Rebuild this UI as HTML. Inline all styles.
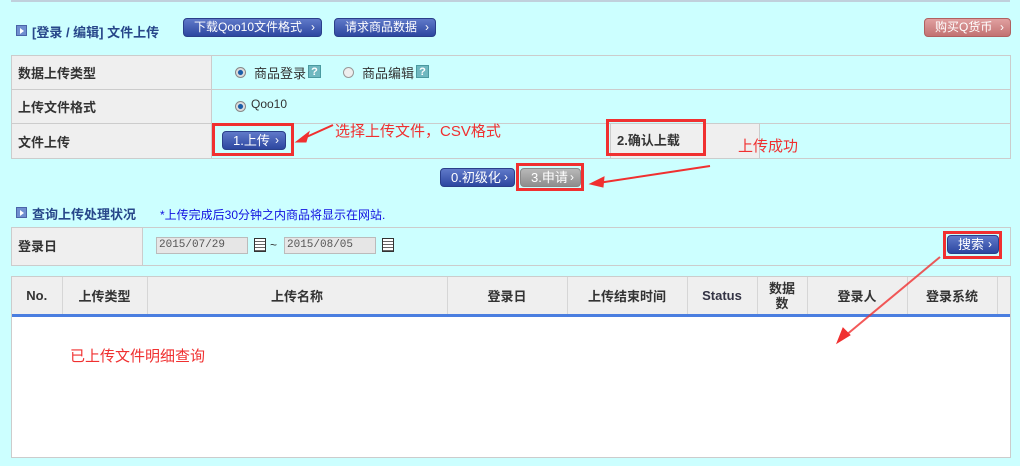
<!DOCTYPE html>
<html><head><meta charset="utf-8"><style>
*{margin:0;padding:0;box-sizing:border-box}
body{width:1020px;height:466px;background:#ccffff;position:relative;overflow:hidden;font-family:"Liberation Sans","Noto Sans CJK SC",sans-serif;font-size:12px;color:#333}
.a{position:absolute}
.ico{width:11px;height:11px;border:1px solid #4a64a8;background:#6f8fd0;}
.ico:after{content:"";position:absolute;left:3px;top:2px;border-left:4px solid #fff;border-top:3px solid transparent;border-bottom:3px solid transparent}
.h{font-weight:bold;color:#27478a;font-size:13px}
.btn{position:absolute;height:19px;border:1px solid #2a3f8a;border-radius:4px;background:linear-gradient(#5f79c9,#2c47a0);color:#fff;font-size:12px;line-height:17px;padding-left:10px;white-space:nowrap}
.btn:after{content:"›";position:absolute;right:6px;top:0;font-size:12px}
.gray{background:linear-gradient(#b8b8b8,#8e8e8e);border-color:#888}
.pink{background:linear-gradient(#e0a0a0,#c27272);border-color:#b06060}
.lbl{background:#efefef;font-weight:bold;font-size:13px;padding-left:6px}
.line{position:absolute;background:#cccccc}
.red{position:absolute;border:3px solid #f03030}
.rt{position:absolute;color:#f03030;font-size:15px}
.inp{position:absolute;height:17px;background:#e6e6e6;border:1px solid #bbb;font-size:11px;color:#555;padding-left:2px;line-height:15px;font-family:"Liberation Mono",monospace}
.cal{position:absolute;width:12px;height:14px;border:1px solid #333;background:repeating-linear-gradient(#fff 0 2px,#666 2px 3px)}
th{font-weight:bold;font-size:13px;color:#333;border-right:1px solid #d6d6d6;text-align:center}
.q{position:absolute;width:13px;height:13px;background:#6fb8c0;color:#fff;font-size:11px;font-weight:bold;text-align:center;line-height:13px;border:1px solid #4a9aa0}
</style></head><body>
<div class="a" style="left:11px;top:0;width:999px;height:2px;background:#c0d0dc"></div>
<div class="a ico" style="left:16px;top:25px"></div>
<div class="a h" style="left:32px;top:22px">[登录 / 编辑] 文件上传</div>
<div class="btn" style="left:183px;top:18px;width:139px">下载Qoo10文件格式</div>
<div class="btn" style="left:334px;top:18px;width:102px">请求商品数据</div>
<div class="btn pink" style="left:924px;top:18px;width:87px">购买Q货币</div>

<div class="a" style="left:11px;top:55px;width:1000px;height:104px;border:1px solid #ccc"></div>
<div class="a lbl" style="left:12px;top:56px;width:200px;height:102px"></div>
<div class="line" style="left:211px;top:56px;width:1px;height:102px"></div>
<div class="line" style="left:12px;top:89px;width:998px;height:1px"></div>
<div class="line" style="left:12px;top:123px;width:998px;height:1px"></div>
<div class="a lbl" style="left:12px;top:63px;background:none">数据上传类型</div>
<div class="a lbl" style="left:12px;top:97px;background:none">上传文件格式</div>
<div class="a lbl" style="left:12px;top:132px;background:none">文件上传</div>
<div class="a" style="left:235px;top:67px;width:11px;height:11px;border-radius:50%;background:radial-gradient(#1a5ea8 35%,#ddd 45%);border:1px solid #888"></div>
<div class="a" style="left:254px;top:63px;font-size:13px">商品登录</div>
<div class="q" style="left:308px;top:65px">?</div>
<div class="a" style="left:343px;top:67px;width:11px;height:11px;border-radius:50%;background:#eee;border:1px solid #999"></div>
<div class="a" style="left:362px;top:63px;font-size:13px">商品编辑</div>
<div class="q" style="left:416px;top:65px">?</div>
<div class="a" style="left:235px;top:101px;width:11px;height:11px;border-radius:50%;background:radial-gradient(#1a5ea8 35%,#ddd 45%);border:1px solid #888"></div>
<div class="a" style="left:251px;top:97px;font-size:12px">Qoo10</div>
<div class="btn" style="left:222px;top:131px;width:64px;font-size:13px">1.上传</div>
<div class="red" style="left:212px;top:123px;width:82px;height:33px"></div>
<div class="rt" style="left:335px;top:120px">选择上传文件，CSV格式</div>
<div class="a lbl" style="left:610px;top:124px;width:150px;height:34px;border-left:1px solid #ccc;border-right:1px solid #ccc;line-height:34px">2.确认上载</div>
<div class="red" style="left:606px;top:119px;width:100px;height:37px"></div>
<div class="rt" style="left:738px;top:135px">上传成功</div>

<div class="btn" style="left:440px;top:168px;width:75px;font-size:13px">0.初级化</div>
<div class="btn gray" style="left:520px;top:168px;width:61px;font-size:13px">3.申请</div>
<div class="red" style="left:516px;top:163px;width:68px;height:28px"></div>

<div class="a ico" style="left:16px;top:207px"></div>
<div class="a h" style="left:32px;top:204px">查询上传处理状况</div>
<div class="a" style="left:160px;top:206px;color:#1010e0;font-size:12px">*上传完成后30分钟之内商品将显示在网站.</div>

<div class="a" style="left:11px;top:227px;width:1000px;height:39px;border:1px solid #ccc"></div>
<div class="a lbl" style="left:12px;top:228px;width:131px;height:37px;border-right:1px solid #ccc;line-height:37px">登录日</div>
<div class="inp" style="left:156px;top:237px;width:92px">2015/07/29</div>
<div class="cal" style="left:254px;top:238px"></div>
<div class="a" style="left:270px;top:238px">~</div>
<div class="inp" style="left:284px;top:237px;width:92px">2015/08/05</div>
<div class="cal" style="left:382px;top:238px"></div>
<div class="btn" style="left:947px;top:235px;width:52px;font-size:13px">搜索</div>
<div class="red" style="left:943px;top:231px;width:59px;height:28px"></div>

<div class="a" style="left:11px;top:276px;width:1000px;height:182px;border:1px solid #ccc;background:#fff"></div>
<table class="a" style="left:12px;top:277px;width:998px;height:40px;background:#efefef;border-collapse:collapse;border-bottom:3px solid #4a7ee0">
<tr><th style="width:50px">No.</th><th style="width:85px">上传类型</th><th style="width:300px">上传名称</th><th style="width:120px">登录日</th><th style="width:120px">上传结束时间</th><th style="width:70px;color:#334">Status</th><th style="width:50px;line-height:15px">数据<br>数</th><th style="width:100px">登录人</th><th style="width:90px">登录系统</th><th style="border:none"></th></tr></table>
<div class="rt" style="left:70px;top:345px">已上传文件明细查询</div>

<svg class="a" style="left:0;top:0;z-index:5" width="1020" height="466">
<g stroke="#f03030" fill="#f03030">
<line x1="333" y1="125" x2="302" y2="139" stroke-width="2"/><polygon points="296,142 309,132 306,142"/>
<line x1="710" y1="166" x2="598" y2="183" stroke-width="2"/><polygon points="590,184 604,177 603,187"/>
<line x1="940" y1="257" x2="845" y2="336" stroke-width="2" stroke-opacity=".8"/><polygon points="837,343 843,328 850,335"/>
</g></svg>
</body></html>
